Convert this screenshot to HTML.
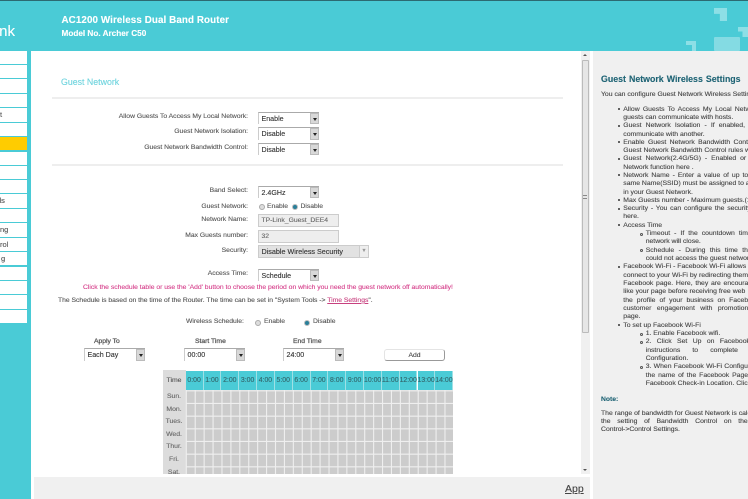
<!DOCTYPE html>
<html><head><meta charset="utf-8">
<style>
html,body{margin:0;padding:0;width:748px;height:499px;overflow:hidden;background:#fff}
#w{position:absolute;left:0;top:0;width:748px;height:499px;overflow:hidden;background:#fff;font-family:"Liberation Sans",sans-serif;font-size:6.78px;color:#555;filter:blur(.3px);-webkit-text-stroke:.12px}
#w div{position:absolute;white-space:nowrap;box-sizing:border-box}
.n{left:0;width:26.5px;background:#fff;height:13.3px;color:#555;font-size:7.5px;line-height:13px}
.l{right:500px;text-align:right;line-height:10px}
.s{width:61px;height:12.5px;background:#fff;border-top:1px solid #aaa;border-left:1px solid #ccc;color:#333;font-size:7.1px;line-height:12px;padding-left:2.5px}
.b{right:0;top:0;width:9px;height:11.5px;background:#d8d8d8;border:1px solid #bbb}
.b i{position:absolute;left:2px;top:4px;width:0;height:0;border:2px solid transparent;border-top:3px solid #222;border-bottom:0}
.r{width:6px;height:6px;border-radius:50%;background:#ddd;border:1px solid #aaa;box-sizing:border-box}
.r.c{background:#2a7f9a;border:1px solid #bbb}
.h{top:1px;width:17.83px;height:19px;background:#4acbd6;border-right:1px solid #9fe0e5;text-align:center;line-height:19px;color:#33666c;font-size:6.9px}
.d{left:0;width:22px;text-align:center;color:#666;line-height:10px;font-size:6.85px}
.t{left:623.3px;line-height:8.3px;color:#444;font-size:6.85px}
.t2{left:645.7px;line-height:8.3px;color:#444;font-size:6.85px}
.dot{width:2.4px;height:2.4px;border-radius:50%;background:#333}
.o{width:3px;height:3px;border-radius:50%;border:.7px solid #555}
.sb{line-height:10px;color:#555;-webkit-text-stroke:.25px #555}
</style></head><body><div id="w">
<div style="left:0;top:0;width:748px;height:51px;background:#4acbd6"></div>
<div style="left:0;top:0;width:748px;height:1px;background:#2c6a72"></div>
<div style="left:-1px;top:24px;color:#fff;font-size:15px;line-height:16px;width:16px;direction:rtl;overflow:hidden">nk</div>
<div style="left:61.5px;top:14px;color:#fff;font-weight:bold;font-size:9.8px;line-height:13px;letter-spacing:.1px">AC1200 Wireless Dual Band Router</div>
<div style="left:61.5px;top:28px;color:#fff;font-weight:bold;font-size:8.2px;line-height:11px">Model No. Archer C50</div>
<div style="left:714px;top:8px;width:13px;height:13px;background:#8ddfe6;clip-path:polygon(0 0,100% 0,100% 100%,45% 100%,45% 45%,0 45%)"></div>
<div style="left:738px;top:27px;width:10px;height:10px;background:#8ddfe6;clip-path:polygon(0 0,100% 0,100% 100%,45% 100%,45% 45%,0 45%)"></div>
<div style="left:686px;top:41px;width:10px;height:10px;background:#8ddfe6;clip-path:polygon(0 0,100% 0,100% 100%,60% 100%,60% 40%,0 40%)"></div>
<div style="left:714px;top:37px;width:26px;height:14px;background:#84dbe3;border-radius:1px"></div>

<div style="left:0;top:51px;width:31px;height:448px;background:#4acbd6"></div>
<div class="n" style="top:50.5px"></div>
<div class="n" style="top:65px"></div>
<div class="n" style="top:79.3px"></div>
<div class="n" style="top:94px"></div>
<div class="n" style="top:108.3px"><span style="position:absolute;left:0;top:0">t</span></div>
<div class="n" style="top:122.7px"></div>
<div class="n" style="top:137px;background:#fc0"></div>
<div class="n" style="top:151.5px"></div>
<div class="n" style="top:165.7px"></div>
<div class="n" style="top:180px"></div>
<div class="n" style="top:194.3px"><span style="position:absolute;left:-3px;top:0">ds</span></div>
<div class="n" style="top:209px"></div>
<div class="n" style="top:223.3px"><span style="position:absolute;left:0;top:0">ng</span></div>
<div class="n" style="top:237.7px"><span style="position:absolute;left:0;top:0">rol</span></div>
<div class="n" style="top:252px"><span style="position:absolute;left:1px;top:0">g</span></div>
<div class="n" style="top:266.5px"></div>
<div class="n" style="top:281px"></div>
<div class="n" style="top:295.3px"></div>
<div class="n" style="top:309.7px"></div>

<div style="left:61px;top:77px;color:#6fd4de;font-size:8.8px;line-height:11px">Guest Network</div>
<div style="left:52px;top:97px;width:511px;height:1.5px;background:#eee"></div>
<div style="left:52px;top:164px;width:511px;height:1.5px;background:#eee"></div>

<div class="l" style="top:111.7px">Allow Guests To Access My Local Network:</div>
<div class="l" style="top:127.3px">Guest Network Isolation:</div>
<div class="l" style="top:142.8px">Guest Network Bandwidth Control:</div>
<div class="s" style="left:258px;top:111.5px">Enable<div class="b"><i></i></div></div>
<div class="s" style="left:258px;top:127px">Disable<div class="b"><i></i></div></div>
<div class="s" style="left:258px;top:142.5px">Disable<div class="b"><i></i></div></div>

<div class="l" style="top:186.3px">Band Select:</div>
<div class="s" style="left:258px;top:185.5px">2.4GHz<div class="b"><i></i></div></div>
<div class="l" style="top:202px">Guest Network:</div>
<div class="r" style="left:259px;top:204.3px"></div>
<div style="left:267px;top:202px;line-height:10px">Enable</div>
<div class="r c" style="left:292px;top:204.3px"></div>
<div style="left:300.5px;top:202px;line-height:10px">Disable</div>
<div class="l" style="top:215px">Network Name:</div>
<div style="left:258px;top:214.3px;width:81px;height:12.5px;background:#eee;border:1px solid #ccc;color:#666;line-height:11px;padding-left:2.5px">TP-Link_Guest_DEE4</div>
<div class="l" style="top:231px">Max Guests number:</div>
<div style="left:258px;top:230px;width:81px;height:12.5px;background:#eee;border:1px solid #ccc;color:#666;line-height:11px;padding-left:2.5px">32</div>
<div class="l" style="top:246px">Security:</div>
<div style="left:258px;top:245px;width:111px;height:12.5px;background:#e2e2e2;border:1px solid #ccc;color:#333;font-size:7.2px;line-height:11px;padding-left:2.5px">Disable Wireless Security<div style="right:0;top:0;width:9px;height:10.5px;background:#eee;border-left:1px solid #ccc;color:#999;font-size:6px;text-align:center;line-height:11px">▾</div></div>
<div class="l" style="top:269.3px">Access Time:</div>
<div class="s" style="left:258px;top:268.5px">Schedule<div class="b"><i></i></div></div>
<div style="left:83px;top:283.2px;color:#d6418c;line-height:10px">Click the schedule table or use the 'Add' button to choose the period on which you need the guest network off automatically!</div>
<div style="left:58px;top:295.8px;color:#555;line-height:10px">The Schedule is based on the time of the Router. The time can be set in "System Tools -&gt; <span style="color:#c8407f;text-decoration:underline">Time Settings</span>".</div>
<div style="left:186px;top:317px;line-height:10px">Wireless Schedule:</div>
<div class="r" style="left:255px;top:319.7px"></div>
<div style="left:264px;top:317px;line-height:10px">Enable</div>
<div class="r c" style="left:304px;top:319.7px"></div>
<div style="left:313px;top:317px;line-height:10px">Disable</div>

<div class="sb" style="left:94px;top:337px">Apply To</div>
<div class="sb" style="left:195px;top:337px">Start Time</div>
<div class="sb" style="left:293px;top:337px">End Time</div>
<div class="s" style="left:84px;top:348px">Each Day<div class="b"><i></i></div></div>
<div class="s" style="left:184px;top:348px">00:00<div class="b"><i></i></div></div>
<div class="s" style="left:283px;top:348px">24:00<div class="b"><i></i></div></div>
<div style="left:384px;top:349px;width:61px;height:12px;background:#fff;border-radius:3px;border-right:1px solid #999;border-bottom:1px solid #999;border-left:1px solid #e4e4e4;border-top:1px solid #e4e4e4;text-align:center;line-height:11px;color:#444">Add</div>

<div style="left:163px;top:370px;width:290px;height:104px;overflow:hidden;background:#fff">
<div style="left:0;top:0;width:23px;height:104px;background:#dcdcdc"></div>
<div style="left:23px;top:20px;width:267px;height:84px;background:#ccc"></div>
<svg style="position:absolute;left:0;top:0" width="290" height="104"><path fill="none" stroke="#efefef" stroke-width="1.1" d="M23.3 20V104M32.22 20V104M41.14 20V104M50.06 20V104M58.98 20V104M67.9 20V104M76.82 20V104M85.74 20V104M94.66 20V104M103.58 20V104M112.5 20V104M121.42 20V104M130.34 20V104M139.26 20V104M148.18 20V104M157.1 20V104M166.02 20V104M174.94 20V104M183.86 20V104M192.78 20V104M201.7 20V104M210.62 20V104M219.54 20V104M228.46 20V104M237.38 20V104M246.3 20V104M255.22 20V104M264.14 20V104M273.06 20V104M281.98 20V104M23 20.8H290M23 33.47H290M23 46.14H290M23 58.81H290M23 71.48H290M23 84.15H290M23 96.82H290"/></svg>
<div class="h" style="left:22.7px">0:00</div>
<div class="h" style="left:40.5px">1:00</div>
<div class="h" style="left:58.4px">2:00</div>
<div class="h" style="left:76.2px">3:00</div>
<div class="h" style="left:94px">4:00</div>
<div class="h" style="left:111.8px">5:00</div>
<div class="h" style="left:129.7px">6:00</div>
<div class="h" style="left:147.5px">7:00</div>
<div class="h" style="left:165.3px">8:00</div>
<div class="h" style="left:183.2px">9:00</div>
<div class="h" style="left:201px">10:00</div>
<div class="h" style="left:218.8px">11:00</div>
<div class="h" style="left:236.6px">12:00</div>
<div class="h" style="left:254.5px">13:00</div>
<div class="h" style="left:272.3px">14:00</div>
<div class="d" style="top:5.5px;color:#555">Time</div>
<div class="d" style="top:21.5px">Sun.</div>
<div class="d" style="top:34.5px">Mon.</div>
<div class="d" style="top:47px">Tues.</div>
<div class="d" style="top:59.5px">Wed.</div>
<div class="d" style="top:72px">Thur.</div>
<div class="d" style="top:85px">Fri.</div>
<div class="d" style="top:97.5px">Sat.</div>
</div>

<div style="left:581px;top:51px;width:9px;height:423px;background:#f0f0f0"></div>
<div style="left:581.5px;top:60px;width:7.5px;height:273px;background:#e6e6e6;border:1px solid #bbb;border-radius:1px"></div>
<div style="left:583px;top:54px;width:0;height:0;border:2px solid transparent;border-bottom:2px solid #555;border-top:0"></div>
<div style="left:583px;top:469px;width:0;height:0;border:2px solid transparent;border-top:2px solid #555;border-bottom:0"></div>
<div style="left:583px;top:195px;width:4px;height:4px;border-top:1px solid #888;border-bottom:1px solid #888"></div>
<div style="left:34px;top:477px;width:556px;height:22px;background:#f0f0f0"></div>
<div style="left:565px;top:483px;font-size:10.5px;line-height:13px;color:#444;text-decoration:underline">App</div>

<div style="left:593px;top:51px;width:155px;height:448px;background:#f0f0f0"></div>
<div style="left:0;top:0;width:748px;height:499px;overflow:hidden">
<div style="left:601px;top:73px;font-weight:bold;font-size:8.8px;line-height:12px;color:#1f6475;word-spacing:.6px">Guest Network Wireless Settings</div>
<div style="left:601px;top:90.5px;line-height:8.3px;color:#444;font-size:6.85px">You can configure Guest Network Wireless Settings here.</div>

<div class="dot" style="left:618px;top:108px"></div>
<div class="t" style="top:105.5px;word-spacing:1.3px">Allow Guests To Access My Local Network - If</div>
<div class="t" style="top:113.8px">guests can communicate with hosts.</div>
<div class="dot" style="left:618px;top:124.5px"></div>
<div class="t" style="top:122px;word-spacing:2.2px">Guest Network Isolation - If enabled, guests</div>
<div class="t" style="top:130.5px">communicate with another.</div>
<div class="dot" style="left:618px;top:141px"></div>
<div class="t" style="top:138.7px;word-spacing:1.5px">Enable Guest Network Bandwidth Control</div>
<div class="t" style="top:147px">Guest Network Bandwidth Control rules will</div>
<div class="dot" style="left:618px;top:157.5px"></div>
<div class="t" style="top:155.3px;word-spacing:2px">Guest Network(2.4G/5G) - Enabled or Disabled</div>
<div class="t" style="top:163.5px">Network function here .</div>
<div class="dot" style="left:618px;top:174px"></div>
<div class="t" style="top:172px;word-spacing:1.06px">Network Name - Enter a value of up to 32</div>
<div class="t" style="top:180.2px">same Name(SSID) must be assigned to all</div>
<div class="t" style="top:188.5px">in your Guest Network.</div>
<div class="dot" style="left:618px;top:199px"></div>
<div class="t" style="top:196.8px">Max Guests number - Maximum guests.(1-32)</div>
<div class="dot" style="left:618px;top:207.5px"></div>
<div class="t" style="top:205px;word-spacing:.9px">Security - You can configure the security of</div>
<div class="t" style="top:213.3px">here.</div>
<div class="dot" style="left:618px;top:224px"></div>
<div class="t" style="top:221.7px">Access Time</div>
<div class="o" style="left:640px;top:232.5px"></div>
<div class="t2" style="top:230px;word-spacing:2.1px">Timeout - If the countdown time</div>
<div class="t2" style="top:238.3px">network will close.</div>
<div class="o" style="left:640px;top:249px"></div>
<div class="t2" style="top:246.7px;word-spacing:2.5px">Schedule - During this time the</div>
<div class="t2" style="top:255px">could not access the guest network.</div>
<div class="dot" style="left:618px;top:265.5px"></div>
<div class="t" style="top:263.3px">Facebook Wi-Fi - Facebook Wi-Fi allows your</div>
<div class="t" style="top:271.7px">connect to your Wi-Fi by redirecting them</div>
<div class="t" style="top:280px;word-spacing:.8px">Facebook page. Here, they are encouraged</div>
<div class="t" style="top:288.3px;word-spacing:.1px">like your page before receiving free web</div>
<div class="t" style="top:296.6px;word-spacing:2.1px">the profile of your business on Facebook</div>
<div class="t" style="top:305px;word-spacing:3.5px">customer engagement with promotions</div>
<div class="t" style="top:313.3px">page.</div>
<div class="dot" style="left:618px;top:323.5px"></div>
<div class="t" style="top:321.5px">To set up Facebook Wi-Fi</div>
<div class="o" style="left:640px;top:332.5px"></div>
<div class="t2" style="top:330px">1. Enable Facebook wifi.</div>
<div class="o" style="left:640px;top:340.5px"></div>
<div class="t2" style="top:338.3px;word-spacing:3.5px">2. Click Set Up on Facebook</div>
<div class="t2" style="top:346.6px;word-spacing:10.2px">instructions to complete the</div>
<div class="t2" style="top:355px">Configuration.</div>
<div class="o" style="left:640px;top:365.5px"></div>
<div class="t2" style="top:363.2px;word-spacing:.35px">3. When Facebook Wi-Fi Configuration</div>
<div class="t2" style="top:371.5px;word-spacing:1px">the name of the Facebook Page</div>
<div class="t2" style="top:379.8px">Facebook Check-in Location. Click</div>
<div style="left:601px;top:395px;font-weight:bold;line-height:9px;color:#1f6475">Note:</div>
<div style="left:601px;top:409.5px;line-height:8.3px;color:#444;font-size:6.85px">The range of bandwidth for Guest Network is calculated</div>
<div style="left:601px;top:418px;line-height:8.3px;color:#444;word-spacing:4.8px;font-size:6.85px">the setting of Bandwidth Control on the</div>
<div style="left:601px;top:426.3px;line-height:8.3px;color:#444;font-size:6.85px">Control-&gt;Control Settings.</div>
</div>
</div></body></html>
